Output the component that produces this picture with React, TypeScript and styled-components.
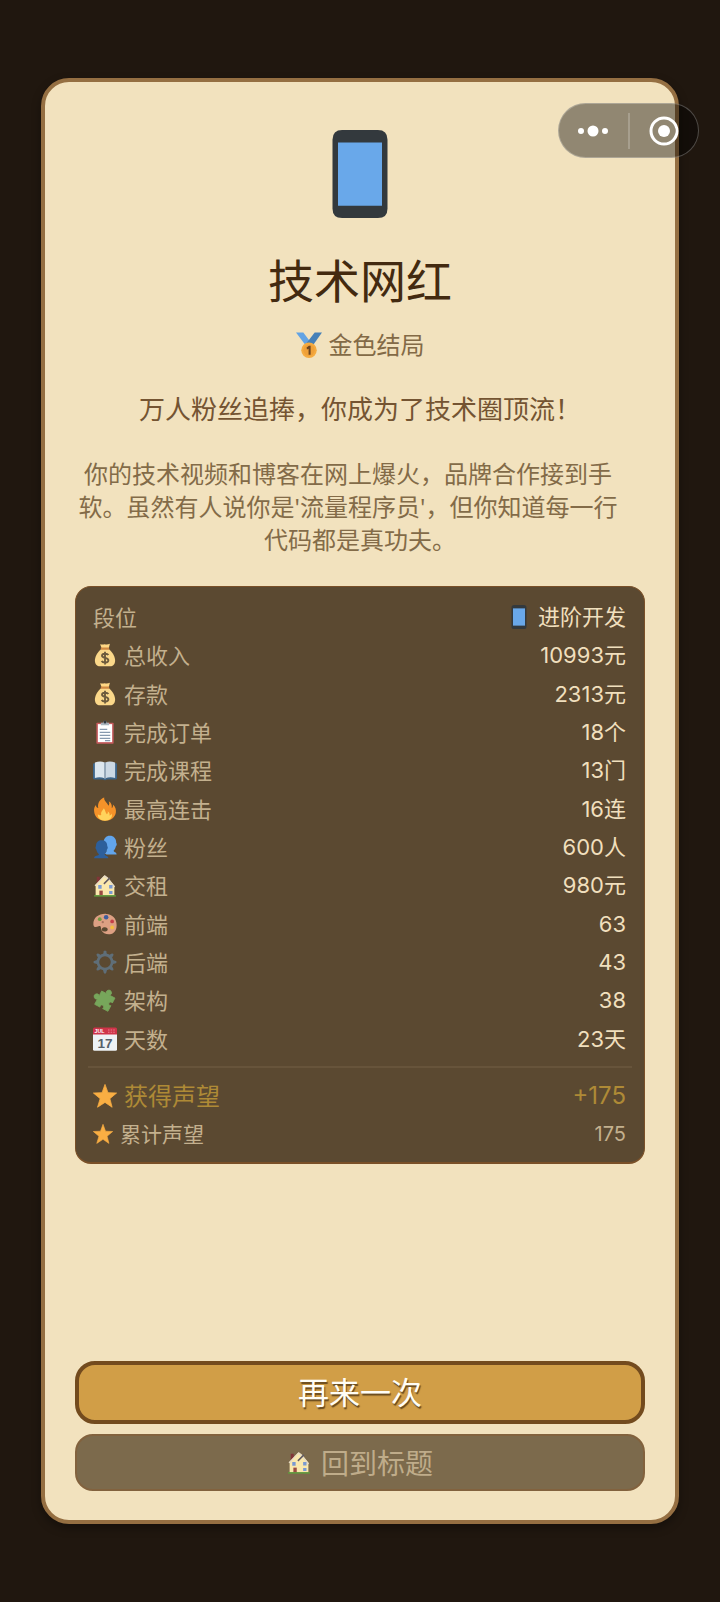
import React from 'react';
import styled, { createGlobalStyle } from 'styled-components';

const GlobalStyle = createGlobalStyle`
  *, *::before, *::after { box-sizing: border-box; }
  body { margin: 0; background: #20170f; }
`;

const Page = styled.div`
  position: relative;
  min-height: 100vh;
  display: flex;
  flex-direction: column;
  padding: 78px 41px;
  background: #20170f;
  font-family: 'Noto Sans', 'Noto Sans CJK SC', sans-serif;
`;

const Card = styled.main`
  flex: 1;
  display: flex;
  flex-direction: column;
  align-items: center;
  padding: 48px 30px 29px;
  border: 4px solid #956f42;
  border-radius: 28px;
  background: #f2e2be;
  box-shadow: 0 4px 10px rgba(0, 0, 0, 0.35);
`;

const Title = styled.h1`
  margin: 32px 0 0;
  font-size: 46px;
  line-height: 60px;
  font-weight: 400;
  color: #432a10;
`;

const Grade = styled.p`
  display: flex;
  align-items: center;
  gap: 7px;
  margin: 17px 0 0;
  font-size: 24px;
  line-height: 36px;
  color: #836a46;
`;

const Tagline = styled.p`
  margin: 28px 0 0;
  font-size: 26px;
  line-height: 36px;
  color: #745432;
`;

const Story = styled.p`
  margin: 30px 0;
  font-size: 24px;
  line-height: 33px;
  text-align: center;
  color: #836b48;
`;

const StoryLine = styled.span<{ $full?: boolean }>`
  display: block;
  padding-right: ${(p) => (p.$full ? '1em' : '0')};
`;

const Panel = styled.section`
  width: 100%;
  padding: 11px 12px 9px;
  border: 1px solid #7a5028;
  border-bottom-width: 2px;
  border-radius: 16px;
  background: #5b4931;
`;

const StatList = styled.dl`
  display: grid;
  grid-auto-rows: 1fr;
  min-height: 460px;
  margin: 0;
`;

const Totals = styled.dl`
  margin: 8px 0 0;
  padding-top: 9px;
  border-top: 2px solid #67543b;
`;

const tones = {
  plain: { size: 22, valueSize: 22, icon: 24, label: '#c3b08e', value: '#f0dfbd' },
  gain: { size: 24, valueSize: 24, icon: 24, label: '#ae8a36', value: '#ae8a36' },
  total: { size: 21, valueSize: 20, icon: 20, label: '#c3b08e', value: '#c3b08e' },
};
type Tone = keyof typeof tones;

const Row = styled.div<{ $tone: Tone }>`
  display: flex;
  align-items: center;
  justify-content: space-between;
  min-height: 38px;
  padding: 0 6px 0 5px;
  font-size: ${(p) => tones[p.$tone].size}px;
  line-height: 30px;
  color: ${(p) => tones[p.$tone].label};
`;

const Label = styled.dt`
  display: flex;
  align-items: center;
  gap: 7px;
`;

const Value = styled.dd<{ $tone: Tone }>`
  display: flex;
  align-items: center;
  gap: 7px;
  margin: 0;
  font-family: Inter, 'Noto Sans CJK SC', sans-serif;
  font-size: ${(p) => tones[p.$tone].valueSize}px;
  color: ${(p) => tones[p.$tone].value};
`;

const Actions = styled.div`
  width: 100%;
  margin-top: auto;
  display: flex;
  flex-direction: column;
  gap: 10px;
`;

const PrimaryButton = styled.button`
  height: 63px;
  padding: 0 0 4px;
  border: 4px solid #734b1e;
  border-radius: 20px;
  background: #d19e47;
  color: #fffdf5;
  font: 400 31px/40px 'Noto Sans CJK SC', sans-serif;
  text-shadow: 1px 2px 1px rgba(70, 45, 15, 0.75);
  cursor: pointer;
`;

const SecondaryButton = styled.button`
  display: flex;
  align-items: center;
  justify-content: center;
  gap: 10px;
  height: 57px;
  padding: 0 0 2px;
  border: 2px solid #82623e;
  border-radius: 18px;
  background: #7c6a4c;
  color: #bfac8a;
  font: 400 28px/36px 'Noto Sans CJK SC', sans-serif;
  cursor: pointer;
`;

const Capsule = styled.div`
  position: absolute;
  top: 103px;
  right: 21px;
  display: flex;
  align-items: center;
  width: 141px;
  height: 55px;
  border: 1px solid rgba(255, 255, 255, 0.25);
  border-radius: 28px;
  background: rgba(0, 0, 0, 0.4);
`;

const CapsuleButton = styled.button`
  flex: 1;
  display: flex;
  align-items: center;
  justify-content: center;
  height: 36px;
  padding: 0;
  border: 0;
  background: none;
  cursor: pointer;

  & + & { border-left: 2px solid rgba(255, 255, 255, 0.2); }
`;

const Glyph = styled.svg<{ $size: number }>`
  flex: none;
  display: block;
  width: ${(p) => p.$size}px;
  height: ${(p) => p.$size}px;
`;

const art: Record<string, React.ReactNode> = {
  phone: (
    <>
      <path d="M19 0h26q7 0 7 7v50q0 7-7 7H19q-7 0-7-7V7q0-7 7-7z" fill="#33393d" />
      <path d="M16 9h32v46H16z" fill="#69a8ea" />
    </>
  ),
  medal: (
    <>
      <path d="M0 1h18l18 24-12 8z" fill="#62a3e4" />
      <path d="M64 1H46L26 27l14 8z" fill="#4680b8" />
      <circle cx="32" cy="45" r="19" fill="#f5ab40" />
      <circle cx="32" cy="45" r="14" fill="#efa038" />
      <path d="M26 38l6-4h4v22h-5V41l-4 2z" fill="#6b4420" />
    </>
  ),
  money: (
    <>
      <path d="M19 3q6 2 12 0 7 2 14-1l-3 12H23z" fill="#ffd885" />
      <path d="M22 16C10 26 5 38 5 48c1 10 6 14 13 14h28c7 0 12-4 13-14 0-10-5-22-17-32z" fill="#fbd88a" />
      <path d="M21 12h22v6H21z" fill="#d18a43" />
      <path d="M41 32c-2-4-17-6-17 2 0 7 17 4 17 12 0 8-15 7-18 2M32 23v34" fill="none" stroke="#6d5b3d" strokeWidth="5" />
    </>
  ),
  clipboard: (
    <>
      <path d="M11 7h42q2 0 2 2v52q0 2-2 2H11q-2 0-2-2V9q0-2 2-2z" fill="#c75b5d" />
      <path d="M13 11h38v48H13z" fill="#fff" />
      <path d="M21 14V7h5q6-10 12 0h5v7z" fill="#a9b4bd" />
      <circle cx="32" cy="5" r="4" fill="#333a40" />
      <path d="M18 25h20M18 33h28M18 41h28M18 49h28M32 55h14" stroke="#8799ae" strokeWidth="3" />
    </>
  ),
  book: (
    <>
      <path d="M0 16q0-2 3-2h58q3 0 3 2v38q0 3-3 3H37q-5 4-10 0H3q-3 0-3-3z" fill="#3d6488" />
      <path d="M5 12q15-6 26 0v42q-12-5-26-1z" fill="#dce6ee" />
      <path d="M59 12q-15-6-26 0v42q12-5 26-1z" fill="#cbd8e4" />
      <path d="M30 12q2-2 4 0v43h-4z" fill="#94a6b6" />
    </>
  ),
  fire: (
    <>
      <path d="M32 63C14 63 4 52 3 38c-1-7 1-13 5-17 0 6 3 8 6 8C11 16 20 4 30 1c-2 9 9 14 11 22 3-4 3-8 1-12 7 4 9 11 8 18 3-1 4-5 3-9 7 6 9 14 8 21-2 13-13 22-29 22z" fill="#f59229" />
      <path d="M32 63c-12 0-20-7-19-17 3 3 7 3 9 1-2-7 4-11 7-17 4 5 4 12 8 16 3-2 3-5 2-8 5 3 6 7 5 11 3 0 5-2 6-5 3 12-6 19-18 19z" fill="#ffd35c" />
    </>
  ),
  people: (
    <>
      <path d="M30 48c4-1 6-3 6-6-6-5-8-12-8-20C28 9 35 2 45 2s17 7 17 19c2 1 2 7-1 9-1 5-3 9-6 12 0 4 8 3 8 10H36z" fill="#62a5ec" />
      <path d="M3 62c0-9 13-6 13-11-4-3-6-7-7-12-3-2-3-8-1-9C8 19 14 14 23 14s15 5 15 16c2 1 2 7-1 9-1 5-3 9-6 12 0 5 10 3 10 11z" fill="#2d5f9b" />
    </>
  ),
  house: (
    <>
      <path d="M10 10h8v18h-8z" fill="#813538" />
      <path d="M7 60V31L29 8l13 8 15 18v26z" fill="#fae8ad" />
      <path d="M4 33L31 5l9 7 19 24-4 3-16-23-10-5L8 35z" fill="#e8dcc4" />
      <path d="M29 29l16-16" stroke="#5f5963" strokeWidth="4" />
      <path d="M14 32h9v10h-9zM43 32h9v9h-9zM43 48h9v8h-9z" fill="#7a99d2" />
      <path d="M17 47h9v14h-9z" fill="#9b4b43" />
      <path d="M3 59h58v4H3z" fill="#5e9e3c" />
    </>
  ),
  palette: (
    <>
      <path d="M35 5C16 4 0 15 1 33c1 10 8 7 14 5 8-2 5 5 8 11 3 7 12 11 22 10 11-1 18-10 18-24C63 17 52 6 35 5zm3 38c3 4 0 9-7 9s-9-5-7-8 10-5 14-1z" fill="#dda083" fillRule="evenodd" />
      <circle cx="18" cy="19" r="5" fill="#719a42" />
      <circle cx="35" cy="14" r="6" fill="#3d5d9d" />
      <circle cx="51" cy="25" r="5" fill="#c43f47" />
      <circle cx="51" cy="41" r="5" fill="#f5bc3c" />
      <circle cx="26" cy="27" r="3" fill="#a9725f" />
    </>
  ),
  gear: (
    <>
      {[0, 45, 90, 135, 180, 225, 270, 315].map((a) => (
        <path key={a} d="M26 13l3-10q3-4 6 0l3 10z" fill="#5f6e78" transform={`rotate(${a} 32 32)`} />
      ))}
      <circle cx="32" cy="32" r="19" fill="none" stroke="#5f6e78" strokeWidth="7" />
    </>
  ),
  puzzle: (
    <path
      d="M13 15h14a7 7 0 1 1 10 0h16v15a5 5 0 1 0 0 8v17H37a5 5 0 1 0-8 0H13V39a7 7 0 1 1 0-10z"
      fill="#77a65b"
      stroke="#77a65b"
      strokeWidth="2"
      strokeLinejoin="round"
      transform="rotate(28 32 32)"
    />
  ),
  calendar: (
    <>
      <path d="M0 18h64v41q0 4-4 4H4q-4 0-4-4z" fill="#eef2f5" />
      <path d="M0 20V5q0-4 4-4h56q4 0 4 4v15z" fill="#cf3349" />
      <path d="M40 8h20M40 14h20" stroke="#ef9aa4" strokeWidth="2" strokeDasharray="4 3" />
      <g fontFamily="'Liberation Sans', sans-serif" fontWeight="700">
        <text x="4" y="15" fontSize="14" fill="#fff">JUL</text>
        <text x="32" y="56" fontSize="36" textAnchor="middle" fill="#56616a">17</text>
      </g>
    </>
  ),
  star: <path d="M32 1l8 22 23 1-18 15 6 23-19-13-20 13 7-23L1 24l23-1z" fill="#f9ae43" stroke="#f9ae43" strokeWidth="2" strokeLinejoin="round" />,
};

const Emoji = ({ name, size = 24 }: { name: string; size?: number }) => (
  <Glyph $size={size} viewBox="0 0 64 64" aria-hidden="true">
    {art[name]}
  </Glyph>
);

interface Stat {
  icon?: string;
  label: string;
  value: string;
  valueIcon?: string;
  tone?: Tone;
}

const stats: Stat[] = [
  { label: '段位', value: '进阶开发', valueIcon: 'phone' },
  { icon: 'money', label: '总收入', value: '10993元' },
  { icon: 'money', label: '存款', value: '2313元' },
  { icon: 'clipboard', label: '完成订单', value: '18个' },
  { icon: 'book', label: '完成课程', value: '13门' },
  { icon: 'fire', label: '最高连击', value: '16连' },
  { icon: 'people', label: '粉丝', value: '600人' },
  { icon: 'house', label: '交租', value: '980元' },
  { icon: 'palette', label: '前端', value: '63' },
  { icon: 'gear', label: '后端', value: '43' },
  { icon: 'puzzle', label: '架构', value: '38' },
  { icon: 'calendar', label: '天数', value: '23天' },
];

const totals: Stat[] = [
  { icon: 'star', label: '获得声望', value: '+175', tone: 'gain' },
  { icon: 'star', label: '累计声望', value: '175', tone: 'total' },
];

const StatRow = ({ icon, label, value, valueIcon, tone = 'plain' }: Stat) => (
  <Row $tone={tone}>
    <Label>
      {icon && <Emoji name={icon} size={tones[tone].icon} />}
      {label}
    </Label>
    <Value $tone={tone}>
      {valueIcon && <Emoji name={valueIcon} />}
      {value}
    </Value>
  </Row>
);

export default function App() {
  return (
    <Page>
      <GlobalStyle />
      <Card>
        <Emoji name="phone" size={88} />
        <Title>技术网红</Title>
        <Grade>
          <Emoji name="medal" size={26} />
          金色结局
        </Grade>
        <Tagline>万人粉丝追捧，你成为了技术圈顶流！</Tagline>
        <Story>
          <StoryLine $full>你的技术视频和博客在网上爆火，品牌合作接到手</StoryLine>
          <StoryLine $full>软。虽然有人说你是'流量程序员'，但你知道每一行</StoryLine>
          <StoryLine>代码都是真功夫。</StoryLine>
        </Story>
        <Panel>
          <StatList>
            {stats.map((s) => (
              <StatRow key={s.label} {...s} />
            ))}
          </StatList>
          <Totals>
            {totals.map((s) => (
              <StatRow key={s.label} {...s} />
            ))}
          </Totals>
        </Panel>
        <Actions>
          <PrimaryButton type="button">再来一次</PrimaryButton>
          <SecondaryButton type="button">
            <Emoji name="house" />
            回到标题
          </SecondaryButton>
        </Actions>
      </Card>
      <Capsule>
        <CapsuleButton type="button" aria-label="更多">
          <svg width="30" height="12" viewBox="0 0 30 12" fill="#fff">
            <circle cx="3" cy="6" r="3" />
            <circle cx="15" cy="6" r="5.5" />
            <circle cx="27" cy="6" r="3" />
          </svg>
        </CapsuleButton>
        <CapsuleButton type="button" aria-label="关闭">
          <svg width="30" height="30" viewBox="0 0 30 30">
            <circle cx="15" cy="15" r="13" fill="none" stroke="#fff" strokeWidth="3" />
            <circle cx="15" cy="15" r="6" fill="#fff" />
          </svg>
        </CapsuleButton>
      </Capsule>
    </Page>
  );
}
